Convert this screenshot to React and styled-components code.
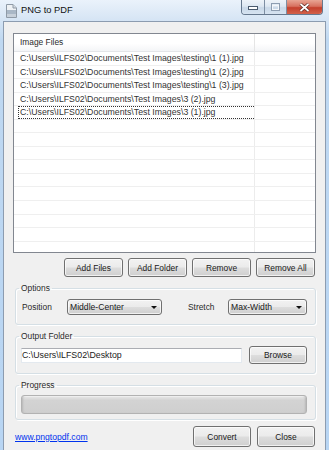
import React from 'react'
import styled, { createGlobalStyle } from 'styled-components'

const files = [
  'C:\\Users\\ILFS02\\Documents\\Test Images\\testing\\1 (1).jpg',
  'C:\\Users\\ILFS02\\Documents\\Test Images\\testing\\1 (2).jpg',
  'C:\\Users\\ILFS02\\Documents\\Test Images\\testing\\1 (3).jpg',
  'C:\\Users\\ILFS02\\Documents\\Test Images\\3 (2).jpg',
  'C:\\Users\\ILFS02\\Documents\\Test Images\\3 (1).jpg',
]
const ROWS = 15

const GlobalStyle = createGlobalStyle`
  html, body { margin: 0; padding: 0; background: #b8d5f3; }
  body { font-family: "Liberation Sans", Arial, sans-serif; color: #000; }
`

// ── Frame ──
const Window = styled.div`
  width: 329px;
  height: 450px;
  box-sizing: border-box;
  padding: 0 3px;
  display: flex;
  flex-direction: column;
  overflow: hidden;
  background: linear-gradient(180deg, #eaf2fb 0px, #d8e6f5 18px, #bfd8f1 40px, #b8d5f3 100%);
`
const TitleBar = styled.div`
  height: 21px;
  display: flex;
  align-items: flex-start;
  flex-shrink: 0;
`
const AppIcon = styled.svg`
  margin: 4px 0 0 2px;
  flex-shrink: 0;
`
const Title = styled.div`
  margin: 5px 0 0 4px;
  font-size: 9.3px;
  line-height: 11px;
  color: #111;
  flex: 1;
`
const Caption = styled.div`
  display: flex;
  height: 15px;
  margin-right: 3px;
  border: 1px solid #66788e;
  border-top: none;
  border-radius: 0 0 4px 4px;
  overflow: hidden;
  box-sizing: border-box;
`
const CapBtn = styled.div`
  width: ${({ $w }) => $w}px;
  height: 100%;
  display: flex;
  align-items: center;
  justify-content: center;
  border-left: ${({ $first }) => ($first ? 'none' : '1px solid #7d8ea3')};
  background: ${({ $close }) =>
    $close
      ? 'linear-gradient(180deg, #e8a594 0%, #d7715f 45%, #c4402d 55%, #d2614a 100%)'
      : 'linear-gradient(180deg, #eef3f9 0%, #dde7f2 45%, #c9d8e8 55%, #d6e3f1 100%)'};
`

const Client = styled.div`
  flex: 1;
  display: flex;
  flex-direction: column;
  background: #f0f0f0;
  border: 1px solid #8c9cb0;
  border-bottom: none;
  padding: 11px 9px 0 9px;
`

// ── List view ──
const List = styled.div`
  height: 220px;
  box-sizing: border-box;
  border: 1px solid #828790;
  background: #fff;
  overflow: hidden;
`
const HeadRow = styled.div`
  display: grid;
  grid-template-columns: 241px 1fr;
  height: 18px;
  box-sizing: border-box;
  border-bottom: 1px solid #e3e5e8;
  background: linear-gradient(180deg, #ffffff 0%, #ffffff 55%, #f4f5f7 100%);
`
const HeadCell = styled.div`
  border-right: 1px solid #e5e5e5;
  padding-left: 6px;
  font-size: 8.4px;
  line-height: 17px;
  color: #2a2a2a;
  &:last-child { border-right: none; }
`
const Row = styled.div`
  display: grid;
  grid-template-columns: 241px 1fr;
  height: 13.55px;
  box-sizing: border-box;
  border-bottom: 1px solid #efefef;
`
const Cell = styled.div`
  border-right: 1px solid #ececec;
  padding-left: 4px;
  display: flex;
  &:last-child { border-right: none; }
`
const FileName = styled.div`
  flex: 1;
  border: 1px dotted ${({ $focus }) => ($focus ? '#333' : 'transparent')};
  border-right: none;
  padding-left: 1px;
  font-size: 8.75px;
  line-height: 11px;
  color: #333;
  white-space: nowrap;
  overflow: hidden;
`

// ── Buttons ──
const ButtonRow = styled.div`
  display: flex;
  justify-content: flex-end;
  gap: 5px;
  margin: 5px 1px 0 0;
`
const Button = styled.div`
  width: ${({ $w }) => $w || 59}px;
  height: ${({ $h }) => $h || 19}px;
  box-sizing: border-box;
  border: 1px solid #707070;
  border-radius: 3px;
  background: linear-gradient(180deg, #f2f2f2 0%, #ebebeb 48%, #dddddd 52%, #cfcfcf 100%);
  box-shadow: inset 0 0 0 1px rgba(255, 255, 255, 0.7);
  display: flex;
  align-items: center;
  justify-content: center;
  font-size: 8.4px;
  color: #1a1a1a;
  flex-shrink: 0;
`

// ── Group boxes ──
const Group = styled.fieldset`
  margin: 6px 0 0 2px;
  padding: ${({ $pad }) => $pad};
  border: 1px solid #d5dfe5;
  border-radius: 3px;
  box-shadow: inset 1px 1px 0 #fff, 1px 1px 0 #fff;
  min-width: 0;
`
const Legend = styled.legend`
  margin-left: 3px;
  padding: 0 2px;
  font-size: 8.4px;
  line-height: 10px;
  color: #2a2a2a;
`
const GroupRow = styled.div`
  display: flex;
  align-items: center;
  padding-left: ${({ $pl }) => $pl || 5}px;
`
const Label = styled.div`
  width: ${({ $w }) => $w}px;
  margin-left: ${({ $ml }) => $ml || 0}px;
  font-size: 8.4px;
  color: #2a2a2a;
  flex-shrink: 0;
`
const Combo = styled.div`
  width: ${({ $w }) => $w}px;
  height: 16px;
  box-sizing: border-box;
  border: 1px solid #707070;
  border-radius: 3px;
  background: linear-gradient(180deg, #f2f2f2 0%, #ebebeb 48%, #dddddd 52%, #cfcfcf 100%);
  box-shadow: inset 0 0 0 1px rgba(255, 255, 255, 0.7);
  display: flex;
  align-items: center;
  padding: 0 4px 0 2px;
  font-size: 8.6px;
  color: #1a1a1a;
  flex-shrink: 0;
`
const ComboText = styled.span`
  flex: 1;
`
const Arrow = styled.span`
  width: 0;
  height: 0;
  border-left: 3px solid transparent;
  border-right: 3px solid transparent;
  border-top: 3px solid #111;
`
const TextBox = styled.div`
  width: 221px;
  height: 15px;
  box-sizing: border-box;
  background: #fff;
  border: 1px solid #e3e9ef;
  border-top-color: #abadb3;
  font-size: 8.8px;
  line-height: 13px;
  color: #222;
  margin-right: 7px;
`
const Progress = styled.div`
  width: 286px;
  height: 19px;
  box-sizing: border-box;
  border: 1px solid #b2b2b2;
  border-radius: 3px;
  background: linear-gradient(180deg, #e9e9e9 0%, #d3d3d3 25%, #cfcfcf 100%);
  box-shadow: inset 2px 0 2px -1px #b8b8b8, inset -2px 0 2px -1px #b8b8b8, inset 0 1px 0 #f4f4f4;
`

// ── Footer ──
const Footer = styled.div`
  display: flex;
  align-items: center;
  gap: 6px;
  margin: 6px 1px 0 2px;
`
const Link = styled.a`
  flex: 1;
  font-size: 8.6px;
  color: #0033ee;
  text-decoration: underline;
`

function TitleIcon() {
  return (
    <AppIcon width="12" height="14" viewBox="0 0 12 14">
      <path d="M1.5 0.5 H8 L11.5 4 V13.5 H1.5 Z" fill="#eef1f4" stroke="#8f9aa6" />
      <path d="M8 0.5 V4 H11.5" fill="#d5dbe2" stroke="#8f9aa6" />
      <rect x="2" y="6" width="9" height="4" fill="#a9b7c6" />
      <rect x="2" y="10" width="9" height="3" fill="#c7d0da" />
    </AppIcon>
  )
}

function CaptionButtons() {
  return (
    <Caption>
      <CapBtn $w={22} $first>
        <svg width="10" height="5" viewBox="0 0 10 5">
          <rect x="0.5" y="1.5" width="9" height="3" fill="#fff" stroke="#4a5a6e" />
        </svg>
      </CapBtn>
      <CapBtn $w={21}>
        <svg width="9" height="8" viewBox="0 0 9 8">
          <rect x="0.5" y="0.5" width="8" height="7" fill="none" stroke="#8d9db1" />
          <rect x="1.5" y="2.5" width="6" height="4" fill="none" stroke="#f3f6fa" />
        </svg>
      </CapBtn>
      <CapBtn $w={35} $close>
        <svg width="11" height="9" viewBox="0 0 11 9">
          <path d="M1.5 1 L9.5 8 M9.5 1 L1.5 8" stroke="#5a2a24" strokeWidth="3.2" />
          <path d="M1.5 1 L9.5 8 M9.5 1 L1.5 8" stroke="#fff" strokeWidth="1.7" />
        </svg>
      </CapBtn>
    </Caption>
  )
}

export default function App() {
  return (
    <>
      <GlobalStyle />
      <Window>
        <TitleBar>
          <TitleIcon />
          <Title>PNG to PDF</Title>
          <CaptionButtons />
        </TitleBar>
        <Client>
          <List>
            <HeadRow>
              <HeadCell>Image Files</HeadCell>
              <HeadCell />
            </HeadRow>
            {Array.from({ length: ROWS }).map((_, i) => (
              <Row key={i}>
                <Cell>
                  <FileName $focus={i === 4}>{files[i] || ''}</FileName>
                </Cell>
                <Cell />
              </Row>
            ))}
          </List>

          <ButtonRow>
            <Button>Add Files</Button>
            <Button>Add Folder</Button>
            <Button>Remove</Button>
            <Button>Remove All</Button>
          </ButtonRow>

          <Group $pad="6px 0 9px 0">
            <Legend>Options</Legend>
            <GroupRow $pl={6}>
              <Label $w={45}>Position</Label>
              <Combo $w={95}>
                <ComboText>Middle-Center</ComboText>
                <Arrow />
              </Combo>
              <Label $w={40} $ml={26}>Stretch</Label>
              <Combo $w={79}>
                <ComboText>Max-Width</ComboText>
                <Arrow />
              </Combo>
            </GroupRow>
          </Group>

          <Group $pad="5px 0 9px 0">
            <Legend>Output Folder</Legend>
            <GroupRow>
              <TextBox>C:\Users\ILFS02\Desktop</TextBox>
              <Button $w={58} $h={18}>Browse</Button>
            </GroupRow>
          </Group>

          <Group $pad="5px 0 5px 0">
            <Legend>Progress</Legend>
            <GroupRow>
              <Progress />
            </GroupRow>
          </Group>

          <Footer>
            <Link>www.pngtopdf.com</Link>
            <Button $w={58} $h={21}>Convert</Button>
            <Button $w={58} $h={21}>Close</Button>
          </Footer>
        </Client>
      </Window>
    </>
  )
}
